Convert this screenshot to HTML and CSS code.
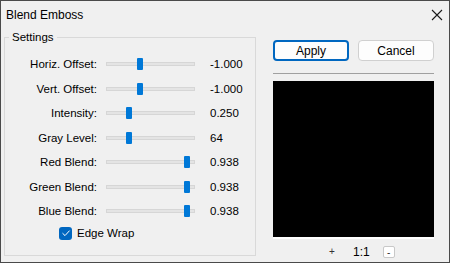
FILE: index.html
```html
<!DOCTYPE html>
<html lang="en">
<head>
<meta charset="UTF-8">
<title>Blend Emboss</title>
<link rel="stylesheet" href="styles.css">
</head>
<body>
<div class="window">
  <div class="titlebar">
    <span class="title">Blend Emboss</span>
    <svg class="close" width="12" height="12" viewBox="0 0 12 12">
      <path d="M1 1L11 11M11 1L1 11" stroke="#1a1a1a" stroke-width="1.1" fill="none"/>
    </svg>
  </div>
  <div class="content">
    <fieldset class="settings">
      <legend>Settings</legend>
      <div class="row">
        <span class="label">Horiz. Offset:</span>
        <div class="slider"><div class="thumb" style="left: 30px"></div></div>
        <span class="value">-1.000</span>
      </div>
      <div class="row">
        <span class="label">Vert. Offset:</span>
        <div class="slider"><div class="thumb" style="left: 30px"></div></div>
        <span class="value">-1.000</span>
      </div>
      <div class="row">
        <span class="label">Intensity:</span>
        <div class="slider"><div class="thumb" style="left: 19px"></div></div>
        <span class="value">0.250</span>
      </div>
      <div class="row">
        <span class="label">Gray Level:</span>
        <div class="slider"><div class="thumb" style="left: 19px"></div></div>
        <span class="value">64</span>
      </div>
      <div class="row">
        <span class="label">Red Blend:</span>
        <div class="slider"><div class="thumb" style="left: 77px"></div></div>
        <span class="value">0.938</span>
      </div>
      <div class="row">
        <span class="label">Green Blend:</span>
        <div class="slider"><div class="thumb" style="left: 77px"></div></div>
        <span class="value">0.938</span>
      </div>
      <div class="row">
        <span class="label">Blue Blend:</span>
        <div class="slider"><div class="thumb" style="left: 77px"></div></div>
        <span class="value">0.938</span>
      </div>
      <div class="check-row">
        <span class="checkbox">
          <svg width="10" height="10" viewBox="0 0 10 10">
            <path d="M1.5 5.2L4 7.6L8.6 2.6" stroke="#fff" stroke-width="1" fill="none"/>
          </svg>
        </span>
        <span>Edge Wrap</span>
      </div>
    </fieldset>
    <div class="side">
      <div class="buttons">
        <button class="btn primary">Apply</button>
        <button class="btn">Cancel</button>
      </div>
      <div class="separator"></div>
      <div class="preview"></div>
      <div class="zoom">
        <span class="zbtn">+</span>
        <span class="ratio">1:1</span>
        <span class="zbtn boxed">-</span>
      </div>
    </div>
  </div>
</div>
</body>
</html>
```

FILE: styles.css
```css
body {
  margin: 0;
  padding: 0;
  font-family: "Liberation Sans", Arial, sans-serif;
  font-size: 11.5px;
  color: #000;
  background-color: #f0f0f0;
}

.window {
  width: 450px;
  height: 263px;
  box-sizing: border-box;
  border: 1px solid #4a4a4a;
  background-color: #f0f0f0;
  display: flex;
  flex-direction: column;
}

.titlebar {
  height: 27px;
  display: flex;
  align-items: center;
  justify-content: space-between;
  padding: 0 6px 0 5px;
  flex-shrink: 0;
}

.title {
  font-size: 12px;
}

.close {
  display: block;
}

.content {
  display: flex;
  flex: 1;
}

.settings {
  width: 252px;
  box-sizing: border-box;
  margin: 1px 0 0 3px;
  padding: 7px 0 0 0;
  height: 227px;
  border: 1px solid #d9d9d9;
  border-radius: 0;
  min-width: 0;
}

.settings legend {
  padding: 0 3px;
  margin-left: 4px;
  line-height: 16px;
}

.row {
  display: flex;
  align-items: center;
  height: 24.5px;
}

.label {
  width: 92px;
  text-align: right;
  color: #000;
}

.slider {
  position: relative;
  width: 89px;
  height: 4px;
  margin-left: 9px;
  background-color: #e4e4e4;
  border: 1px solid #d6d6d6;
  box-sizing: border-box;
}

.thumb {
  position: absolute;
  top: -5px;
  width: 6px;
  height: 12px;
  border-radius: 1px;
  background-color: #0078d7;
}

.value {
  margin-left: 15px;
}

.check-row {
  display: flex;
  align-items: center;
  gap: 5px;
  margin: 3px 0 0 54px;
}

.checkbox {
  width: 13px;
  height: 13px;
  border-radius: 3px;
  background-color: #0067c0;
  display: flex;
  align-items: center;
  justify-content: center;
}

.side {
  margin-left: 17px;
  width: 161px;
  display: flex;
  flex-direction: column;
  padding-top: 12px;
}

.buttons {
  display: flex;
  gap: 9px;
}

.btn {
  width: 76px;
  height: 21px;
  box-sizing: border-box;
  font-family: inherit;
  font-size: 12px;
  background-color: #fdfdfd;
  border: 1px solid #d0d0d0;
  border-radius: 4px;
  padding: 0;
  color: #000;
}

.btn.primary {
  border: 2px solid #0067c0;
}

.separator {
  height: 1px;
  background-color: #a0a0a0;
  margin-top: 12px;
}

.preview {
  height: 156px;
  flex-shrink: 0;
  margin-top: 7px;
  background-color: #000;
  border-bottom: 2px solid #fff;
}

.zoom {
  display: flex;
  align-items: center;
  margin: 6px 0 0 53px;
}

.zbtn {
  width: 12px;
  height: 12px;
  box-sizing: border-box;
  font-size: 10px;
  line-height: 11px;
  text-align: center;
  color: #333;
  border-radius: 2px;
}

.zbtn.boxed {
  background-color: #fff;
  border: 1px solid #c8c8c8;
}

.ratio {
  font-size: 12px;
  margin: 0 13px 0 15px;
}
```
